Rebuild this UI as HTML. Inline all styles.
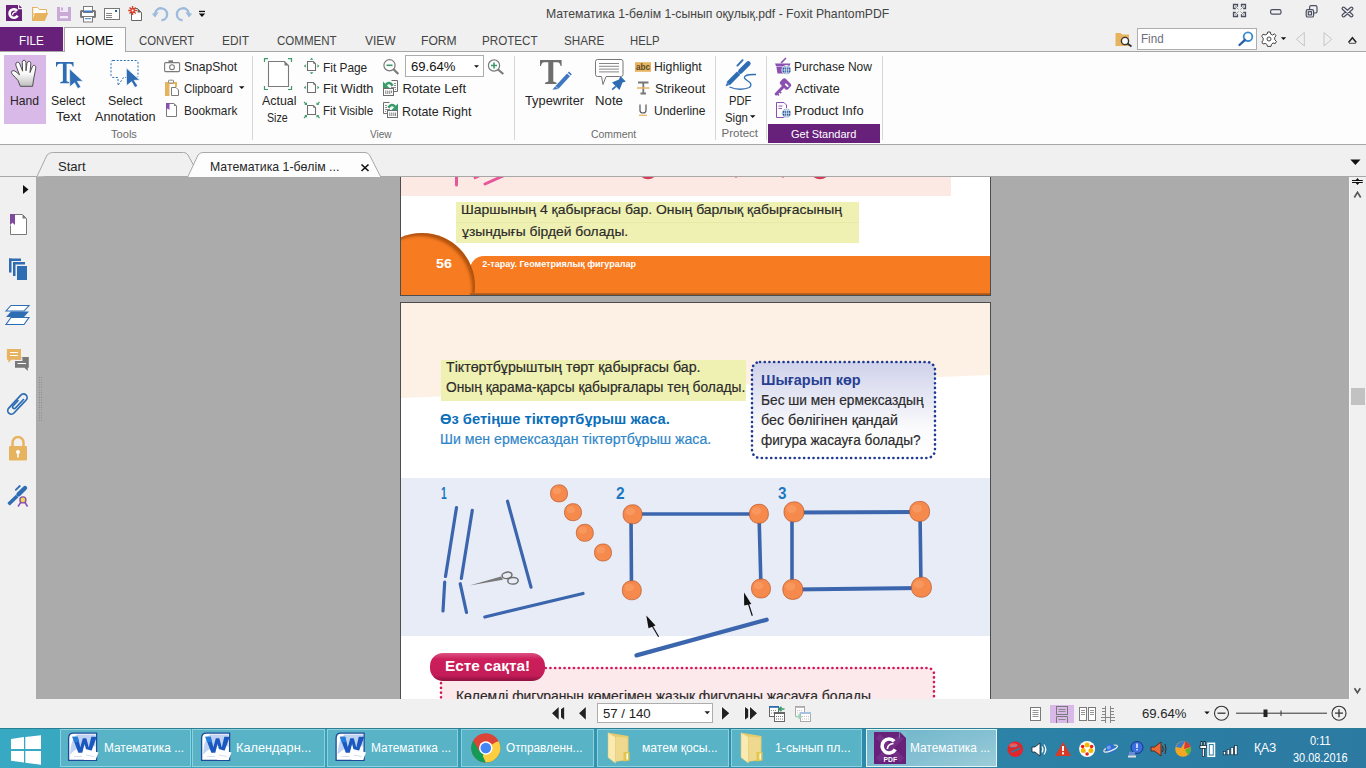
<!DOCTYPE html>
<html><head><meta charset="utf-8"><style>
*{margin:0;padding:0;box-sizing:border-box}
html,body{width:1366px;height:768px;overflow:hidden;background:#f0f0f0;font-family:"Liberation Sans",sans-serif;font-size:12px;color:#333}
.a{position:absolute}
.t{position:absolute;white-space:nowrap;line-height:1;transform-origin:0 0}
svg{position:absolute;overflow:visible}
</style></head><body>

<svg style="left:0;top:0" width="220" height="27">
 <path d="M6 5H18V9.2H22V21H6Z" fill="#68217a"/>
 <path d="M19.2 5V7.9H22Z" fill="#68217a"/>
 <path d="M17.2 10.8A4.3 4.3 0 1 0 17.6 15.6" stroke="#fff" stroke-width="2.6" fill="none"/>
 <path d="M12.3 15.2Q13 11.5 16.5 11.8" stroke="#fff" stroke-width="1.3" fill="none"/>
 <path d="M32.5 7.5H37.5L39.5 9.5H46.5V14H32.5Z" fill="#fff" stroke="#e8b35f" stroke-width="1"/>
 <path d="M32 21L35.3 13H48.2L44.8 21Z" fill="#e8b35f"/>
 <rect x="32" y="7" width="1.2" height="14" fill="#e8b35f"/>
 <rect x="57" y="7" width="14" height="14" fill="#c9aad6"/>
 <rect x="60" y="7" width="8" height="5" fill="#f1ecf4"/>
 <rect x="61" y="7.5" width="2" height="3" fill="#c9aad6"/>
 <rect x="60" y="16" width="8" height="2.3" fill="#f1ecf4"/>
 <rect x="81" y="11" width="14" height="6" rx="0.5" fill="#fff" stroke="#7a7a7a" stroke-width="2"/>
 <rect x="83.5" y="6.5" width="9" height="6" fill="#fff" stroke="#7a7a7a"/>
 <rect x="84" y="10.5" width="8" height="1.8" fill="#3f7bc0"/>
 <rect x="83.5" y="16.5" width="9" height="5.5" fill="#fff" stroke="#7a7a7a"/>
 <rect x="85" y="18.2" width="6" height="1" fill="#3f7bc0"/>
 <rect x="104.5" y="8.5" width="15" height="11" fill="#fff" stroke="#777"/>
 <path d="M106 13.5H112M106 15.5H112M106 17.5H112" stroke="#777" stroke-width="0.9"/>
 <rect x="115" y="10" width="2" height="2" fill="#1f5fb0"/>
 <path d="M131.5 8.5H137.5L141.5 12.5V20.5H131.5Z" fill="#fff" stroke="#666"/>
 <path d="M137.5 8.5V12.5H141.5Z" fill="#666"/>
 <path d="M128.2 10.5H137M132.6 6V15M129.5 7.4L135.7 13.6M135.7 7.4L129.5 13.6" stroke="#d9412b" stroke-width="1.4"/>
 <circle cx="132.6" cy="10.5" r="1" fill="#fff"/>
 <path d="M155.2 13.2A6 6 0 1 1 161.5 20.3" stroke="#9dbcdc" stroke-width="2.4" fill="none"/>
 <path d="M151.8 13.8L158.8 12L155 17.5Z" fill="#9dbcdc"/>
 <path d="M188.8 13.2A6 6 0 1 0 182.5 20.3" stroke="#9dbcdc" stroke-width="2.4" fill="none"/>
 <path d="M192.2 13.8L185.2 12L189 17.5Z" fill="#9dbcdc"/>
 <rect x="199" y="10.8" width="6" height="1.3" fill="#111"/>
 <path d="M198.8 13.4H205.2L202 17Z" fill="#111"/>
</svg>
<svg style="left:1220px;top:0" width="146" height="27">
 <g fill="none" stroke="#4b4e5f" stroke-width="1.2">
  <path d="M17.5 6.8V4.5H13.5V8.5H15.8M21.5 6.8V4.5H25.5V8.5H23.2M17.5 14.2V16.5H13.5V12.5H15.8M21.5 14.2V16.5H25.5V12.5H23.2" stroke-width="1.3"/>
  <path d="M18.3 9.3L15.5 6.5M20.7 9.3L23.5 6.5M18.3 11.7L15.5 14.5M20.7 11.7L23.5 14.5" stroke-width="1" stroke-dasharray="1 0.6"/>
  <rect x="50.6" y="9.6" width="10.4" height="4.6" rx="1.6"/>
  <rect x="89.6" y="5.6" width="7.4" height="7.4" rx="1.6"/>
  <rect x="86.2" y="9.6" width="7.4" height="7.4" rx="1.6" fill="#f0f0f0"/>
  <rect x="88.3" y="11.7" width="3.2" height="3.2"/>
 </g>
 <path d="M123.5 8.5L131.5 15.5M131.5 8.5L123.5 15.5" stroke="#4b4e5f" stroke-width="4" stroke-linecap="round"/>
 <path d="M123.5 8.5L131.5 15.5M131.5 8.5L123.5 15.5" stroke="#f0f0f0" stroke-width="1.6" stroke-linecap="round"/>
</svg>

<div class="a" style="left:0;top:27px;width:63px;height:24px;background:#68217a"></div>
<div class="a" style="left:0;top:51px;width:1366px;height:1px;background:#a6a6a6"></div>
<div class="a" style="left:64px;top:27px;width:62px;height:25px;background:#fdfdfd;border:1px solid #a6a6a6;border-bottom:none"></div>
<div class="a" style="left:0;top:52px;width:1366px;height:92px;background:#fdfdfd"></div>
<div class="a" style="left:65px;top:51px;width:60px;height:1px;background:#fdfdfd"></div>
<div class="a" style="left:0;top:144px;width:1366px;height:1px;background:#a6a6a6"></div>

<div class="a" style="left:4px;top:55px;width:42px;height:69px;background:#d8b9e7"></div>
<div class="a" style="left:252px;top:56px;width:1px;height:84px;background:#d6d6d6"></div>
<div class="a" style="left:514px;top:56px;width:1px;height:84px;background:#d6d6d6"></div>
<div class="a" style="left:715px;top:56px;width:1px;height:84px;background:#d6d6d6"></div>
<div class="a" style="left:766px;top:56px;width:1px;height:84px;background:#d6d6d6"></div>
<div class="a" style="left:882px;top:56px;width:1px;height:84px;background:#d6d6d6"></div>
<div class="a" style="left:768px;top:124px;width:112px;height:19px;background:#68217a"></div>
<div class="a" style="left:405px;top:55px;width:79px;height:22px;background:#fff;border:1px solid #adadad"></div>
<svg style="left:0;top:0" width="1366" height="145">
 <defs><linearGradient id="hg" x1="0" y1="0" x2="0" y2="1"><stop offset="0" stop-color="#fff"/><stop offset="0.5" stop-color="#fafafa"/><stop offset="1" stop-color="#bdbdbd"/></linearGradient></defs>
 <path d="M20.3 86.3L18 80.5Q15 77 12.3 74.3Q10.5 72 12.2 70.8Q13.8 70 16 71.8L19.5 74.8L15.8 65.2Q15.3 62.5 17.3 62.2Q19 62 19.8 64L22.6 71.2L22.3 62.4Q22.4 60.2 24.1 60.2Q25.8 60.3 25.9 62.4L26 70.8L27 63.2Q27.5 61.2 29.3 61.4Q31 61.7 30.8 63.8L30 72.5L32.3 66.8Q33 65 34.6 65.4Q36.2 66 35.8 67.8L33.5 80L32.6 86.3Z" fill="url(#hg)" stroke="#4a4a4a" stroke-width="0.95" stroke-linejoin="round"/>
 <path d="M56 62H73.5V66.8H72.8Q72.2 63.8 70 63.8H66.6V81.3L69.3 82.2V83.2H60.2V82.2L62.9 81.3V63.8H59.5Q57.3 63.8 56.7 66.8H56Z" fill="#2e6db4"/>
 <path d="M69.5 68.8L83 81.3H77.2L80.9 87L77.8 88.6L74.6 82.8L69.8 86.8Z" fill="#2e6db4" stroke="#fdfdfd" stroke-width="0.6"/>
 <path d="M113 60.5H136Q138 60.5 138 62.5V75.5Q138 77.5 136 77.5H123.5L118 85.5V77.5H113Q111 77.5 111 75.5V62.5Q111 60.5 113 60.5Z" fill="none" stroke="#2e6db4" stroke-width="1" stroke-dasharray="2 1.6"/>
 <path d="M126.2 67.8L140 80.3H134.2L137.9 86L134.8 87.6L131.6 81.8L126.5 85.8Z" fill="#2e6db4" stroke="#fdfdfd" stroke-width="0.8"/>
 <rect x="164.6" y="62.6" width="15" height="9" rx="1" fill="none" stroke="#7a7a7a" stroke-width="1.1"/>
 <rect x="168.5" y="60.3" width="4.5" height="2.3" fill="#7a7a7a"/>
 <circle cx="172" cy="67.2" r="2.4" fill="none" stroke="#7a7a7a" stroke-width="1.1"/>
 <rect x="165" y="82" width="4.5" height="14" fill="#e8b35f"/>
 <rect x="165" y="82" width="12" height="2" fill="#e8b35f"/>
 <rect x="175" y="82" width="2" height="5" fill="#e8b35f"/>
 <rect x="168.5" y="80.2" width="5" height="2.8" rx="0.8" fill="#fff" stroke="#7a7a7a" stroke-width="0.9"/>
 <path d="M171.5 87.5H176L178.5 90V95.5H171.5Z" fill="#fff" stroke="#7a7a7a" stroke-width="1"/>
 <path d="M239 86.3H244.5L241.75 89.1Z" fill="#111"/>
 <path d="M166.5 103.5H174L176.5 106V116.5H166.5Z" fill="#fff" stroke="#7a7a7a" stroke-width="1"/>
 <path d="M174 103.5V106H176.5Z" fill="#7a7a7a"/>
 <path d="M166 103H169.5V110L167.75 108.5L166 110Z" fill="#8a4fb0"/>
 <!-- actual size -->
 <path d="M264.5 62V58.6H268M288 58.6H291.5V62M264.5 86V89.5H268M288 89.5H291.5V86" fill="none" stroke="#3a9a6a" stroke-width="1.2"/>
 <path d="M268.5 61.5H284.5L288.5 65.5V86.5H268.5Z" fill="#fff" stroke="#7a7a7a" stroke-width="1.1"/>
 <path d="M284.5 61.5V65.5H288.5Z" fill="#7a7a7a"/>
 <!-- fit page -->
 <path d="M307.5 61.5H313.3L315.5 63.7V70.5H307.5Z" fill="#fff" stroke="#6e6e6e" stroke-width="1.1"/>
 <path d="M313.3 61.5V63.7H315.5Z" fill="#6e6e6e"/>
 <path d="M309.8 59.8L311.6 57.8L313.4 59.8ZM309.8 72.3L311.6 74.3L313.4 72.3ZM305.8 64.2L303.8 66L305.8 67.8ZM317.4 64.2L319.4 66L317.4 67.8Z" fill="#3a9a6a"/>
 <path d="M307.5 82.5H313.3L315.5 84.7V92.5H307.5Z" fill="#fff" stroke="#6e6e6e" stroke-width="1.1"/>
 <path d="M313.3 82.5V84.7H315.5Z" fill="#6e6e6e"/>
 <path d="M305.8 85.7L303.8 87.5L305.8 89.3ZM317.4 85.7L319.4 87.5L317.4 89.3Z" fill="#3a9a6a"/>
 <path d="M307.5 105.5H313.3L315.5 107.7V114.5H307.5Z" fill="#fff" stroke="#6e6e6e" stroke-width="1.1"/>
 <path d="M313.3 105.5V107.7H315.5Z" fill="#6e6e6e"/>
 <path d="M304 102L306 104M319.5 102L317.5 104M304 118L306 116M319.5 118L317.5 116" stroke="#3a9a6a" stroke-width="1.1"/>
 <path d="M307 105H304.3L307 102.3ZM316.5 105H319.2L316.5 102.3ZM307 115H304.3L307 117.7ZM316.5 115H319.2L316.5 117.7Z" fill="#3a9a6a"/>
 <!-- zoom out / in -->
 <circle cx="389.5" cy="65.3" r="5.6" fill="none" stroke="#7a7a7a" stroke-width="1.2"/>
 <path d="M393.5 69.3L398.3 74" stroke="#7a7a7a" stroke-width="2.2"/>
 <path d="M386.5 65.3H392.5" stroke="#3a9a6a" stroke-width="1.6"/>
 <circle cx="494" cy="65.5" r="5.6" fill="none" stroke="#7a7a7a" stroke-width="1.2"/>
 <path d="M498 69.5L503.3 74" stroke="#7a7a7a" stroke-width="2.2"/>
 <path d="M491 65.5H497M494 62.5V68.5" stroke="#3a9a6a" stroke-width="1.6"/>
 <path d="M474 65.2H479L476.5 67.8Z" fill="#111"/>
 <!-- rotate -->
 <path d="M391.5 80.5H397.5V91.5H393.5" fill="none" stroke="#6e6e6e" stroke-width="1"/>
 <path d="M394 83.5H396M394 85.5H396M391 87.5H396M395 89.5H396" stroke="#6e6e6e" stroke-width="0.8"/>
 <rect x="383.5" y="88.5" width="10" height="7" fill="#fff" stroke="#6e6e6e" stroke-width="1"/>
 <path d="M385.8 90.5V94M387.8 90.5V94M389.8 90.5V94M391.6 90.5V93" stroke="#6e6e6e" stroke-width="0.9"/>
 <path d="M383 81.5V88H389.5Z" fill="#3a9a6a"/>
 <path d="M385.8 84.8Q389.5 80.8 392.6 85.8" stroke="#3a9a6a" stroke-width="2.6" fill="none"/>
 <path d="M389.5 102.5H383.5V113.5H387.5" fill="none" stroke="#6e6e6e" stroke-width="1"/>
 <path d="M385 105.5H387M385 107.5H387M385 109.5H390M385 111.5H386" stroke="#6e6e6e" stroke-width="0.8"/>
 <rect x="387.5" y="110.5" width="10" height="7" fill="#fff" stroke="#6e6e6e" stroke-width="1"/>
 <path d="M389.8 112.5V116M391.8 112.5V116M393.8 112.5V116M395.6 112.5V116" stroke="#6e6e6e" stroke-width="0.9"/>
 <path d="M398 103.5V110H391.5Z" fill="#3a9a6a"/>
 <path d="M395.2 106.8Q391.5 102.8 388.4 107.8" stroke="#3a9a6a" stroke-width="2.6" fill="none"/>
 <!-- typewriter -->
 <path d="M540 60H561.6V66H560.6Q560 62.2 557.5 62.2H553.3V81.5L556.5 82.7V84H545V82.7L548.3 81.5V62.2H544.1Q541.6 62.2 541 66H540Z" fill="#6e6e6e"/>
 <path d="M555.5 86L567 73.5L570 76.3L558.5 88.8Z" fill="#3f78c0"/>
 <path d="M567.8 72.7L569 71.5L571.8 74.2L570.7 75.4Z" fill="#3f78c0"/>
 <path d="M555.2 86.3L552.5 89.8L558.2 89Z" fill="#3f78c0"/>
 <!-- note -->
 <path d="M597.5 59.5H621Q623 59.5 623 61.5V74.5Q623 76.5 621 76.5H606L603 84.5L601.5 76.5H597.5Q595.5 76.5 595.5 74.5V61.5Q595.5 59.5 597.5 59.5Z" fill="#fff" stroke="#777" stroke-width="1"/>
 <path d="M599 63.5H619M599 66.3H619M599 69.1H619M599 71.9H619" stroke="#888" stroke-width="1"/>
 <path d="M620.3 76L625.8 81.4L622.5 82.5L619.5 89.9L612 82.4L619 79.5Z" fill="#2e6db4" stroke="#fdfdfd" stroke-width="0.8" paint-order="stroke"/>
 <path d="M615.8 86.3L612.2 89.7" stroke="#2e6db4" stroke-width="1.6"/>
 <!-- highlight/strike/underline -->
 <rect x="635" y="62.2" width="16" height="9.6" fill="#e8b35f"/>
 <text x="636" y="70.3" style="font-family:'Liberation Sans';font-weight:bold" font-size="9" fill="#5a4a30" textLength="14" lengthAdjust="spacingAndGlyphs">abc</text>
 <path d="M638 82.5H648.5M643.3 82.5V93.5M640.5 93.5H646" stroke="#777" stroke-width="1.8"/>
 <path d="M637 88H649.5" stroke="#e8b35f" stroke-width="1.5"/>
 <path d="M640 104.5V110.5Q640 113 643 113Q646 113 646 110.5V104.5" stroke="#555" stroke-width="1.2" fill="none"/>
 <path d="M639 115.3H647" stroke="#e8b35f" stroke-width="1.2"/>
 <!-- pdf sign -->
 <path d="M728.2 83.6L738.6 73.2" stroke="#2e6db4" stroke-width="4.6"/>
 <path d="M725.6 86.2L727 82.6L729.3 84.9Z" fill="#2e6db4"/>
 <path d="M740.3 71.5L748.3 63.5" stroke="#2e6db4" stroke-width="4.6" stroke-linecap="round"/>
 <path d="M737.4 65.6L742.6 60.2" stroke="#2e6db4" stroke-width="1.9" stroke-linecap="round"/>
 <path d="M729.5 87Q740 91.2 749.5 87.5Q753.2 84 747.5 80.7Q742.5 77.8 745.5 75.8Q748.5 74.3 756 74.5" stroke="#2e6db4" stroke-width="1.3" fill="none"/>
 <path d="M750 115.3H755.5L752.7 118Z" fill="#111"/>
 <!-- purchase/activate/product -->
 <path d="M775 63.5H790.5L789.5 66H776Z" fill="#8a4fb0"/>
 <path d="M776.3 66.5H787L786 73.5H777.5Z" fill="#8a4fb0"/>
 <path d="M781 63L786 58" stroke="#8a4fb0" stroke-width="1.6"/>
 <circle cx="786.5" cy="70" r="4.6" fill="#2d5fa0" stroke="#fdfdfd" stroke-width="0.8"/>
 <path d="M782 70H791M786.5 65.5V74.5M783.3 67H789.7M783.3 73H789.7" stroke="#fff" stroke-width="0.6" fill="none"/>
 <ellipse cx="786.5" cy="70" rx="2" ry="4.5" fill="none" stroke="#fff" stroke-width="0.6"/>
 <g transform="translate(785.5 84) rotate(45)"><rect x="-5.5" y="-3.8" width="11" height="7.6" rx="2" fill="#8a4fb0"/><rect x="-0.5" y="-1" width="4.5" height="2" rx="1" fill="#fdfdfd"/></g>
 <path d="M783 87L776.2 94" stroke="#8a4fb0" stroke-width="3" stroke-linecap="round"/>
 <path d="M777.3 93.8L779 95.5M779.5 91.5L781.2 93.2" stroke="#8a4fb0" stroke-width="1.6"/>
 <path d="M776.5 102.5H784L786.5 105V109M784.5 117.5H776.5V102.5" fill="none" stroke="#8a4fb0" stroke-width="1"/>
 <path d="M778.5 106H782.5M778.5 108.5H782" stroke="#8a4fb0" stroke-width="0.9"/>
 <circle cx="786.5" cy="113.3" r="4.6" fill="#2d5fa0" stroke="#fdfdfd" stroke-width="0.8"/>
 <path d="M782 113.3H791M786.5 108.8V117.8M783.3 110.5H789.7M783.3 116.2H789.7" stroke="#fff" stroke-width="0.6" fill="none"/>
 <ellipse cx="786.5" cy="113.3" rx="2" ry="4.5" fill="none" stroke="#fff" stroke-width="0.6"/>
</svg>

<div class="a" style="left:1137px;top:28px;width:120px;height:22px;background:#fff;border:1px solid #adadad"></div>
<svg style="left:0;top:0" width="1366" height="60">
 <path d="M1115.5 33H1120.5L1122 34.5H1129V46H1115.5Z" fill="#e8b35f"/>
 <circle cx="1125" cy="41" r="3.6" fill="#fff" stroke="#333" stroke-width="1.4"/>
 <path d="M1127.5 43.5L1131.5 46.5" stroke="#333" stroke-width="1.8"/>
 <circle cx="1248" cy="36.7" r="4.3" fill="none" stroke="#3a8ad0" stroke-width="1.8"/>
 <path d="M1245 39.8L1239.5 45" stroke="#2a5fa5" stroke-width="2.4" stroke-linecap="round"/>
 <g transform="translate(1269 39)"><path d="M-1.3 -7H1.3L1.8 -4.8L3.6 -3.9L5.5 -5.2L7 -3.3L5.6 -1.3L5.8 0.8L7.4 2.4L6.2 4.6L4 4L2.4 5.4L2 7.4H-1.5L-2.1 5.4L-3.8 4.4L-5.9 5L-7.2 3L-5.8 1.2L-5.9 -0.9L-7.3 -2.8L-6 -4.8L-3.8 -4.1L-1.9 -5Z" fill="#fff" stroke="#444" stroke-width="1"/><circle r="2" fill="none" stroke="#444" stroke-width="1"/></g>
 <path d="M1280.8 37.2H1286.2L1283.5 40Z" fill="#111"/>
 <path d="M1304.3 32.5L1296.5 39.2L1304.3 46Z" fill="none" stroke="#c6c6c6" stroke-width="1"/>
 <path d="M1324 32.5L1331.8 39.2L1324 46Z" fill="none" stroke="#c6c6c6" stroke-width="1"/>
 <path d="M1348.5 42.5L1352.4 37.7L1356.3 42.5" fill="none" stroke="#222" stroke-width="1.5"/>
 <path d="M1349 43.3H1355.8" stroke="#222" stroke-width="0.8"/>
</svg>

<div class="a" style="left:0;top:176px;width:1366px;height:1px;background:#a8a8a8"></div>
<svg style="left:0;top:145px" width="400" height="32">
<path d="M37 31.5L47 10Q49.5 7.5 52.5 7.5H183.5Q186.5 7.5 188 10L195 23" fill="#f0f0f0" stroke="#a8a8a8" stroke-width="1"/>
<path d="M188 31.5L198 10Q200 7.5 203 7.5H365Q368 7.5 369.5 10L380.5 31.5Z" fill="#fdfdfd" stroke="#a8a8a8" stroke-width="1"/>
<path d="M188.5 31.5H380" stroke="#fdfdfd" stroke-width="1.2"/>
<path d="M361.5 164.5L368.5 171M368.5 164.5L361.5 171" transform="translate(0 -145)" stroke="#111" stroke-width="1.6"/>
</svg>
<svg style="left:1345px;top:155px" width="20" height="15"><path d="M5.3 4.5H15.5L10.4 10Z" fill="#111"/></svg>

<svg style="left:0;top:177px" width="36" height="521">
 <path d="M23 8L28.5 12.5L23 17Z" fill="#111"/>
 <path d="M10.5 37.5H22.5L26.5 41.5V57.5H10.5Z" fill="#fff" stroke="#7a7a7a" stroke-width="1"/>
 <path d="M22.5 37.5V41.5H26.5Z" fill="#7a7a7a"/>
 <path d="M10 37H15V48.2L12.5 46L10 48.2Z" fill="#7d4a9e"/><path d="M10 48.5L12.5 46.3L15 48.5" fill="none" stroke="#fff" stroke-width="0.8"/>
 <rect x="9" y="81.5" width="2.5" height="14" fill="#2e6db4"/><rect x="9" y="81.5" width="12" height="2.5" fill="#2e6db4"/>
 <rect x="13" y="85" width="2.5" height="14" fill="#2e6db4"/><rect x="13" y="85" width="12" height="2.5" fill="#2e6db4"/>
 <rect x="17" y="89" width="10" height="14" fill="#2e6db4"/>
 <path d="M11 128.5H29L24 134H6Z" fill="#fff" stroke="#2e6db4" stroke-width="1.1"/>
 <path d="M11 134.5H29L24 140H6Z" fill="#2e6db4"/>
 <path d="M11 140.5H29L24 147.5H6Z" fill="#fff" stroke="#2e6db4" stroke-width="1.1"/>
 <path d="M15 180H28.8V190.8H27.8L27.8 194L24.5 190.8H15Z" fill="#787878"/>
 <path d="M17.5 186.5H26" stroke="#fff" stroke-width="1.1"/>
 <path d="M6.9 171.9H21V182.8H11.5L8.3 185.8V182.8H6.9Z" fill="#e8b35f" stroke="#f0f0f0" stroke-width="0.9" paint-order="stroke"/>
 <path d="M10 175.5H18M10 178.5H18" stroke="#fff" stroke-width="1.1"/>
 <path d="M21.8 180.5V183.5H15" fill="none" stroke="#f0f0f0" stroke-width="1.2"/>
 <g transform="translate(17.5 227) rotate(-47)" fill="none" stroke="#2e6db4" stroke-width="1.7"><path d="M6.5 3.6H-9A3.6 3.6 0 0 1 -9 -3.6H8.8A3.6 3.6 0 0 1 8.8 3.6H6"/><path d="M8 1.3H-4.8A1.7 1.7 0 0 1 -4.8 -2H3.5"/></g>
 <path d="M12.5 270V265.5A5.5 5.5 0 0 1 23.5 265.5V270" fill="none" stroke="#e8b35f" stroke-width="2.5"/>
 <rect x="9" y="269" width="18" height="14.5" rx="1" fill="#e8b35f"/>
 <circle cx="18" cy="275" r="2" fill="#fff"/><rect x="17.2" y="275.5" width="1.6" height="5" fill="#fff"/>
 <path d="M8.6 327.3L17.2 319" stroke="#2e6db4" stroke-width="3.6" stroke-linecap="butt"/>
 <path d="M8.3 328L9.8 325.8L10.8 327Z" fill="#2e6db4"/>
 <path d="M18.5 317.3L25 311" stroke="#2e6db4" stroke-width="4.4" stroke-linecap="round"/>
 <path d="M15.8 312.8L19.8 309" stroke="#2e6db4" stroke-width="1.8" stroke-linecap="round"/>
 <path d="M21 325L18 329.5M24.8 325L27.5 329.5" stroke="#8a4fb0" stroke-width="1.5"/>
 <circle cx="22.9" cy="322.9" r="3" fill="#f5d94a" stroke="#8a4fb0" stroke-width="1.4"/>
</svg>

<div class="a" style="left:36px;top:177px;width:1313px;height:522px;background:#ababab;overflow:hidden">
<div class="a" style="left:-36px;top:-177px;width:1366px;height:768px">

<div class="a" style="left:400px;top:100px;width:591px;height:196px;background:#fff;border:1px solid #4d4d4d;border-top:none;overflow:hidden">
 <div class="a" style="left:0;top:0;width:550px;height:96px;background:#fde9e3"></div>
 <svg style="left:-401px;top:-100px" width="1366" height="400">
  <line x1="456.5" y1="175" x2="456.5" y2="185" stroke="#e8559a" stroke-width="3" stroke-linecap="round"/>
  <line x1="485" y1="184" x2="504" y2="175.5" stroke="#e8559a" stroke-width="3" stroke-linecap="round"/>
  <line x1="474" y1="178.3" x2="479" y2="176" stroke="#e8559a" stroke-width="2.5"/>
  <path d="M641 175 Q648 181 655 175" stroke="#d83a5a" stroke-width="2.5" fill="none"/>
  <path d="M813 175 Q820 181 827 175" stroke="#d83a5a" stroke-width="2.5" fill="none"/>
  <circle cx="736" cy="176" r="1.5" fill="#d83a5a"/>
  <circle cx="783" cy="176" r="1.5" fill="#d83a5a"/>
 </svg>
 <div class="a" style="left:55px;top:102px;width:403px;height:41px;background:#eff1b3"></div>
 <div class="a" style="left:55px;top:122px;width:403px;height:1px;background:#e7e9ab"></div>
 <div class="a" style="left:69px;top:156px;width:521px;height:40px;background:#f77b20;border-radius:14px 0 0 0"></div>
 <div class="a" style="left:-32px;top:133px;width:106px;height:106px;border-radius:50%;background:#f77b20;box-shadow:inset -3px 3px 3px rgba(120,50,0,.55)"></div>
 <div class="a" style="left:69px;top:193px;width:521px;height:3px;background:linear-gradient(#c8661c,#8b4a1a)"></div>
</div>
<div class="a" style="left:400px;top:302px;width:591px;height:500px;background:#fff;border:1px solid #4d4d4d;overflow:hidden">
 <svg style="left:-401px;top:-303px" width="1366" height="800">
  <path d="M401 303 L990 303 L990 375 L401 398 Z" fill="#fdf0e5"/>
  <defs><linearGradient id="g1" x1="0" y1="0" x2="0" y2="1"><stop offset="0" stop-color="#cfd2ea"/><stop offset="0.7" stop-color="#fbfbfd"/><stop offset="1" stop-color="#fff"/></linearGradient></defs>
  <rect x="752" y="362" width="183" height="96" rx="8" fill="url(#g1)" stroke="#1f3a93" stroke-width="2.6" stroke-dasharray="0.1 4.6" stroke-linecap="round"/>
  <rect x="401" y="478" width="589" height="158" fill="#e8ecf7"/>
 </svg>
 <div class="a" style="left:40px;top:57px;width:305px;height:41px;background:#eff1b3"></div>
</div>
<svg style="left:0;top:0" width="1366" height="768"><line x1="456.5" y1="507.5" x2="445.5" y2="576.5" stroke="#3b66ad" stroke-width="3.2" stroke-linecap="round"/><line x1="444.7" y1="582" x2="443" y2="611" stroke="#3b66ad" stroke-width="3.2" stroke-linecap="round"/><line x1="472.3" y1="510.3" x2="461.3" y2="578.5" stroke="#3b66ad" stroke-width="3.2" stroke-linecap="round"/><line x1="460.2" y1="583.7" x2="466.5" y2="612.5" stroke="#3b66ad" stroke-width="3.2" stroke-linecap="round"/><line x1="507.5" y1="501.2" x2="531" y2="587.2" stroke="#3b66ad" stroke-width="3.2" stroke-linecap="round"/><line x1="484.8" y1="617" x2="583" y2="593.5" stroke="#3b66ad" stroke-width="3.2" stroke-linecap="round"/><g fill="none" stroke="#6e6e6e" stroke-width="1.5"><ellipse cx="507" cy="575.3" rx="5" ry="3.2" transform="rotate(-10 507 575.3)"/><ellipse cx="513" cy="580.8" rx="5.2" ry="3.3" transform="rotate(-5 513 580.8)"/></g><path d="M469.5 585.5L501 576.5L503 579.8Z" fill="#7a7a7a"/><g transform="translate(559 493.4)"><path d="M-8.5 0 C-8.5 -5.10 -5.10 -8.5 0 -8.5 C5.10 -8.93 8.5 -4.68 8.5 0 C8.67 5.10 5.10 8.5 0 8.5 C-5.10 8.5 -8.5 5.10 -8.5 0Z" fill="#f58a4c" stroke="#b9552a" stroke-width="0.7"/><ellipse cx="-2.12" cy="-2.55" rx="4.25" ry="3.40" fill="#f9a36e" opacity="0.55"/></g><g transform="translate(573 512.2)"><path d="M-8.5 0 C-8.5 -5.10 -5.10 -8.5 0 -8.5 C5.10 -8.93 8.5 -4.68 8.5 0 C8.67 5.10 5.10 8.5 0 8.5 C-5.10 8.5 -8.5 5.10 -8.5 0Z" fill="#f58a4c" stroke="#b9552a" stroke-width="0.7"/><ellipse cx="-2.12" cy="-2.55" rx="4.25" ry="3.40" fill="#f9a36e" opacity="0.55"/></g><g transform="translate(584.8 532.8)"><path d="M-8.5 0 C-8.5 -5.10 -5.10 -8.5 0 -8.5 C5.10 -8.93 8.5 -4.68 8.5 0 C8.67 5.10 5.10 8.5 0 8.5 C-5.10 8.5 -8.5 5.10 -8.5 0Z" fill="#f58a4c" stroke="#b9552a" stroke-width="0.7"/><ellipse cx="-2.12" cy="-2.55" rx="4.25" ry="3.40" fill="#f9a36e" opacity="0.55"/></g><g transform="translate(603 552.5)"><path d="M-8.5 0 C-8.5 -5.10 -5.10 -8.5 0 -8.5 C5.10 -8.93 8.5 -4.68 8.5 0 C8.67 5.10 5.10 8.5 0 8.5 C-5.10 8.5 -8.5 5.10 -8.5 0Z" fill="#f58a4c" stroke="#b9552a" stroke-width="0.7"/><ellipse cx="-2.12" cy="-2.55" rx="4.25" ry="3.40" fill="#f9a36e" opacity="0.55"/></g><line x1="632" y1="514" x2="759" y2="514" stroke="#3b66ad" stroke-width="3.6" stroke-linecap="round"/><line x1="631" y1="514" x2="631.5" y2="590" stroke="#3b66ad" stroke-width="3.6" stroke-linecap="round"/><line x1="759" y1="514" x2="761" y2="588" stroke="#3b66ad" stroke-width="3.6" stroke-linecap="round"/><g transform="translate(632.6 514.3)"><path d="M-9.5 0 C-9.5 -5.70 -5.70 -9.5 0 -9.5 C5.70 -9.97 9.5 -5.23 9.5 0 C9.69 5.70 5.70 9.5 0 9.5 C-5.70 9.5 -9.5 5.70 -9.5 0Z" fill="#f58a4c" stroke="#b9552a" stroke-width="0.7"/><ellipse cx="-2.38" cy="-2.85" rx="4.75" ry="3.80" fill="#f9a36e" opacity="0.55"/></g><g transform="translate(758.9 513.8)"><path d="M-9.5 0 C-9.5 -5.70 -5.70 -9.5 0 -9.5 C5.70 -9.97 9.5 -5.23 9.5 0 C9.69 5.70 5.70 9.5 0 9.5 C-5.70 9.5 -9.5 5.70 -9.5 0Z" fill="#f58a4c" stroke="#b9552a" stroke-width="0.7"/><ellipse cx="-2.38" cy="-2.85" rx="4.75" ry="3.80" fill="#f9a36e" opacity="0.55"/></g><g transform="translate(631.8 590.3)"><path d="M-9.5 0 C-9.5 -5.70 -5.70 -9.5 0 -9.5 C5.70 -9.97 9.5 -5.23 9.5 0 C9.69 5.70 5.70 9.5 0 9.5 C-5.70 9.5 -9.5 5.70 -9.5 0Z" fill="#f58a4c" stroke="#b9552a" stroke-width="0.7"/><ellipse cx="-2.38" cy="-2.85" rx="4.75" ry="3.80" fill="#f9a36e" opacity="0.55"/></g><g transform="translate(761 588.5)"><path d="M-9.5 0 C-9.5 -5.70 -5.70 -9.5 0 -9.5 C5.70 -9.97 9.5 -5.23 9.5 0 C9.69 5.70 5.70 9.5 0 9.5 C-5.70 9.5 -9.5 5.70 -9.5 0Z" fill="#f58a4c" stroke="#b9552a" stroke-width="0.7"/><ellipse cx="-2.38" cy="-2.85" rx="4.75" ry="3.80" fill="#f9a36e" opacity="0.55"/></g><line x1="794" y1="512.5" x2="920" y2="512" stroke="#3b66ad" stroke-width="4" stroke-linecap="round"/><line x1="793" y1="589.5" x2="921" y2="588" stroke="#3b66ad" stroke-width="4" stroke-linecap="round"/><line x1="792" y1="512" x2="792" y2="589" stroke="#3b66ad" stroke-width="3.6" stroke-linecap="round"/><line x1="920" y1="512" x2="921" y2="587" stroke="#3b66ad" stroke-width="3.6" stroke-linecap="round"/><g transform="translate(794 511.9)"><path d="M-10 0 C-10 -6.00 -6.00 -10 0 -10 C6.00 -10.50 10 -5.50 10 0 C10.20 6.00 6.00 10 0 10 C-6.00 10 -10 6.00 -10 0Z" fill="#f58a4c" stroke="#b9552a" stroke-width="0.7"/><ellipse cx="-2.50" cy="-3.00" rx="5.00" ry="4.00" fill="#f9a36e" opacity="0.55"/></g><g transform="translate(919.6 511.4)"><path d="M-10 0 C-10 -6.00 -6.00 -10 0 -10 C6.00 -10.50 10 -5.50 10 0 C10.20 6.00 6.00 10 0 10 C-6.00 10 -10 6.00 -10 0Z" fill="#f58a4c" stroke="#b9552a" stroke-width="0.7"/><ellipse cx="-2.50" cy="-3.00" rx="5.00" ry="4.00" fill="#f9a36e" opacity="0.55"/></g><g transform="translate(792.8 589.4)"><path d="M-10 0 C-10 -6.00 -6.00 -10 0 -10 C6.00 -10.50 10 -5.50 10 0 C10.20 6.00 6.00 10 0 10 C-6.00 10 -10 6.00 -10 0Z" fill="#f58a4c" stroke="#b9552a" stroke-width="0.7"/><ellipse cx="-2.50" cy="-3.00" rx="5.00" ry="4.00" fill="#f9a36e" opacity="0.55"/></g><g transform="translate(921.4 587.2)"><path d="M-10 0 C-10 -6.00 -6.00 -10 0 -10 C6.00 -10.50 10 -5.50 10 0 C10.20 6.00 6.00 10 0 10 C-6.00 10 -10 6.00 -10 0Z" fill="#f58a4c" stroke="#b9552a" stroke-width="0.7"/><ellipse cx="-2.50" cy="-3.00" rx="5.00" ry="4.00" fill="#f9a36e" opacity="0.55"/></g><line x1="636.5" y1="655.4" x2="766.7" y2="619.7" stroke="#3b66ad" stroke-width="4.2" stroke-linecap="round"/><line x1="658.6" y1="636.7" x2="650.5" y2="623" stroke="#111" stroke-width="1.2"/><path d="M646.3 615.5L655.5 625.5L648.5 628.3Z" fill="#111"/><line x1="752.3" y1="615.8" x2="747.5" y2="601" stroke="#111" stroke-width="1.2"/><path d="M744 592.5L751.3 604L744.2 605.5Z" fill="#111"/><rect x="441" y="668" width="493" height="60" rx="6" fill="#fbe9eb" stroke="#d4185c" stroke-width="2.6" stroke-dasharray="0.1 4.6" stroke-linecap="round"/><defs><linearGradient id="g2" x1="0" y1="0" x2="0" y2="1"><stop offset="0" stop-color="#dc5283"/><stop offset="0.22" stop-color="#cc1f5c"/><stop offset="0.8" stop-color="#c41c57"/><stop offset="1" stop-color="#8e1240"/></linearGradient></defs><rect x="430" y="653" width="115" height="28" rx="13" fill="url(#g2)"/></svg>
<div class="t" style="left:460.84px;top:203.34px;font-size:13.5px;color:#2b2b2b;transform:scaleX(1.0343);-webkit-text-stroke:0.18px #2b2b2b;">Шаршының 4 қабырғасы бар. Оның барлық қабырғасының</div>
<div class="t" style="left:461.87px;top:224.97px;font-size:13.5px;color:#2b2b2b;transform:scaleX(1.0236);-webkit-text-stroke:0.18px #2b2b2b;">ұзындығы бірдей болады.</div>
<div class="t" style="left:436.35px;top:257.53px;font-size:12px;color:#fff;font-weight:bold;transform:scaleX(1.1920);-webkit-text-stroke:0px #fff;">56</div>
<div class="t" style="left:482.35px;top:260.43px;font-size:9px;color:#fff;font-weight:bold;-webkit-text-stroke:0px #fff;">2-тарау. Геометриялық фигуралар</div>
<div class="t" style="left:446.35px;top:359.77px;font-size:14px;color:#2b2b2b;transform:scaleX(1.0140);-webkit-text-stroke:0.18px #2b2b2b;">Тіктөртбұрыштың төрт қабырғасы бар.</div>
<div class="t" style="left:445.58px;top:380.17px;font-size:14px;color:#2b2b2b;transform:scaleX(0.9843);-webkit-text-stroke:0.18px #2b2b2b;">Оның қарама-қарсы қабырғалары тең болады.</div>
<div class="t" style="left:440.04px;top:412.07px;font-size:14px;color:#0c6fba;font-weight:bold;transform:scaleX(1.0498);-webkit-text-stroke:0px #0c6fba;">Өз бетіңше тіктөртбұрыш жаса.</div>
<div class="t" style="left:439.87px;top:432.17px;font-size:14px;color:#2f86c8;transform:scaleX(1.0086);-webkit-text-stroke:0.18px #2f86c8;">Ши мен ермексаздан тіктөртбұрыш жаса.</div>
<div class="t" style="left:761.00px;top:372.87px;font-size:14px;color:#283f93;font-weight:bold;transform:scaleX(1.0302);-webkit-text-stroke:0px #283f93;">Шығарып көр</div>
<div class="t" style="left:760.80px;top:392.97px;font-size:14px;color:#2b2b2b;transform:scaleX(0.9799);-webkit-text-stroke:0.18px #2b2b2b;">Бес ши мен ермексаздың</div>
<div class="t" style="left:761.14px;top:412.55px;font-size:14px;color:#2b2b2b;transform:scaleX(1.0187);-webkit-text-stroke:0.18px #2b2b2b;">бес бөлігінен қандай</div>
<div class="t" style="left:761.29px;top:433.15px;font-size:14px;color:#2b2b2b;transform:scaleX(0.9746);-webkit-text-stroke:0.18px #2b2b2b;">фигура жасауға болады?</div>
<div class="t" style="left:441.16px;top:485.61px;font-size:16px;color:#1a78c2;font-weight:bold;transform:scaleX(0.6400);-webkit-text-stroke:0px #1a78c2;">1</div>
<div class="t" style="left:616.32px;top:485.61px;font-size:16px;color:#1a78c2;font-weight:bold;transform:scaleX(0.9677);-webkit-text-stroke:0px #1a78c2;">2</div>
<div class="t" style="left:778.24px;top:485.61px;font-size:16px;color:#1a78c2;font-weight:bold;transform:scaleX(0.9500);-webkit-text-stroke:0px #1a78c2;">3</div>
<div class="t" style="left:444.94px;top:659.31px;font-size:14.5px;color:#fff;font-weight:bold;transform:scaleX(1.0573);-webkit-text-stroke:0px #fff;">Есте сақта!</div>
<div class="t" style="left:455.89px;top:689.07px;font-size:14px;color:#2b2b2b;transform:scaleX(0.9911);-webkit-text-stroke:0.18px #2b2b2b;">Көлемді фигураның көмегімен жазық фигураны жасауға болады.</div>
</div></div>

<svg style="left:38px;top:376px" width="6" height="48"><path d="M1.5 1V46M3.5 1V46" stroke="#8c8c8c" stroke-width="1" stroke-dasharray="1 1.5"/></svg>
<div class="a" style="left:1349px;top:177px;width:17px;height:522px;background:#f0f0f0;border-left:1px solid #f8f8f8"></div>
<svg style="left:1349px;top:177px" width="17" height="522">
 <path d="M3 3.5H13.8M3 5.5H13.8" stroke="#111" stroke-width="1.1"/>
 <path d="M6.6 3.2L8.5 1L10.4 3.2ZM6.6 5.8L8.5 8L10.4 5.8Z" fill="#111"/>
 <path d="M5.3 20.5L8.5 15.3L11.7 20.5" fill="none" stroke="#555" stroke-width="1.6"/>
 <rect x="2" y="211" width="14" height="17" fill="#c2c2c2"/>
 <path d="M5.5 511.3L8.4 515.8L11.3 511.3" fill="none" stroke="#555" stroke-width="1.7"/>
</svg>

<div class="a" style="left:597px;top:703px;width:116px;height:20px;background:#fff;border:1px solid #adadad"></div>
<div class="a" style="left:1050px;top:705px;width:24px;height:18px;background:#d8b9e7"></div>
<svg style="left:0;top:698px" width="1366" height="30">
 <g fill="#222" stroke="#fff" stroke-width="1.1" paint-order="stroke" stroke-linejoin="round">
 <path d="M552 15.3L558.7 9V21.7Z"/><path d="M561 11.3L564.2 9V21.7L561 19.3Z"/>
 <path d="M579 15.3L585.8 9V21.7Z"/>
 <path d="M704.5 13.3H710L707.3 16.2Z" stroke="none"/>
 <path d="M722 9V21.7L729.3 15.3Z"/>
 <path d="M745 9L748.2 11.3V19.3L745 21.7Z"/><path d="M750 9V21.7L757 15.3Z"/>
 </g>
 <rect x="769.5" y="8.5" width="9" height="10" fill="#fff" stroke="#666"/>
 <rect x="769" y="8" width="10" height="1.8" fill="#2e6db4"/>
 <path d="M771 12.5H777M771 15H777" stroke="#888" stroke-width="0.9" stroke-dasharray="1 1"/>
 <rect x="774.5" y="14.5" width="10" height="9" fill="#fff" stroke="#666"/>
 <rect x="774" y="14" width="11" height="2" fill="#666"/>
 <path d="M776 18.5H783M776 21H783" stroke="#666" stroke-width="0.9" stroke-dasharray="1 1"/>
 <path d="M784.5 11H779.5M781.5 8.8L779 11L781.5 13.2" stroke="#3a9a6a" stroke-width="1.7" fill="none"/>
 <rect x="795.5" y="8.5" width="9" height="10" fill="#fff" stroke="#aaa"/>
 <rect x="795" y="8" width="10" height="1.8" fill="#aaa"/>
 <path d="M797 12.5H803M797 15H803" stroke="#bbb" stroke-width="0.9" stroke-dasharray="1 1"/>
 <rect x="800.5" y="14.5" width="10" height="9" fill="#fff" stroke="#aaa"/>
 <rect x="800" y="14" width="11" height="2" fill="#a9c2e2"/>
 <path d="M802 18.5H809M802 21H809" stroke="#bbb" stroke-width="0.9" stroke-dasharray="1 1"/>
 <path d="M795 18.5H800.5M798.5 16.3L801 18.5L798.5 20.7" stroke="#9fd3b8" stroke-width="1.7" fill="none"/>
 <rect x="1030.5" y="9.5" width="10" height="13" fill="#fff" stroke="#7a7a7a"/>
 <path d="M1032.5 12.5H1038.5M1032.5 14.5H1038.5M1032.5 16.5H1038.5M1032.5 18.5H1038.5" stroke="#7a7a7a" stroke-width="0.8"/>
 <rect x="1056.5" y="8.5" width="11" height="8" fill="none" stroke="#7a7a7a"/>
 <path d="M1058.5 11.5H1065.5M1058.5 13.5H1065.5" stroke="#7a7a7a" stroke-width="0.8"/>
 <path d="M1056.5 25V18.5H1067.5V25" fill="none" stroke="#7a7a7a"/>
 <path d="M1058.5 21.5H1065.5" stroke="#7a7a7a" stroke-width="0.8"/>
 <rect x="1079.5" y="9.5" width="7" height="13" fill="#fff" stroke="#7a7a7a"/>
 <rect x="1088.5" y="9.5" width="7" height="13" fill="#fff" stroke="#7a7a7a"/>
 <path d="M1081 12.5H1085M1081 14.5H1085M1081 16.5H1085M1090 12.5H1094M1090 14.5H1094M1090 16.5H1094" stroke="#7a7a7a" stroke-width="0.8"/>
 <path d="M1105.5 8V25M1110.5 8V25M1105.5 10.5H1102M1105.5 13.5H1102M1105.5 16.5H1102M1110.5 10.5H1114M1110.5 13.5H1114M1110.5 16.5H1114M1101 19.5H1115M1101 22.5H1105.5M1110.5 22.5H1115" stroke="#7a7a7a" stroke-width="0.9"/>
 <path d="M1204.3 13.4H1209.7L1207 16.2Z" fill="#111"/>
 <circle cx="1221.5" cy="15.2" r="7" fill="none" stroke="#333" stroke-width="1.1"/>
 <path d="M1217.5 15.2H1225.5" stroke="#333" stroke-width="1.3"/>
 <path d="M1236 15.2H1327" stroke="#333" stroke-width="1"/>
 <rect x="1263.5" y="11.5" width="4" height="7.5" fill="#222"/>
 <path d="M1281 12.5V18" stroke="#333" stroke-width="1"/>
 <circle cx="1339" cy="15.2" r="7" fill="none" stroke="#333" stroke-width="1.1"/>
 <path d="M1335 15.2H1343M1339 11.2V19.2" stroke="#333" stroke-width="1.3"/>
</svg>

<div class="a" style="left:0;top:728px;width:1366px;height:40px;background:linear-gradient(90deg,#38a9c2 0%,#36a5bd 20%,#3198b2 40%,#2d8aab 62%,#2b7fa5 80%,#2c7aa2 100%)"></div>
<div class="a" style="left:0;top:728px;width:1366px;height:1px;background:#2a7f95"></div>
<svg style="left:0;top:728px" width="1366" height="40">
 <path d="M11 10.9L24 9.1V21.1H11Z M25.3 9L41 7.3V21.1H25.3Z M11 22.9H24V34.6L11 32.8Z M25.3 22.9H41V36.7L25.3 34.8Z" fill="#fff"/>
</svg>
<div class="a" style="left:60px;top:729px;width:131px;height:38px;background:#58b3c6;border:1px solid #8fd0dc"></div>
<div class="a" style="left:192px;top:729px;width:133px;height:38px;background:#58b3c6;border:1px solid #8fd0dc"></div>
<div class="a" style="left:327px;top:729px;width:131px;height:38px;background:#58b3c6;border:1px solid #8fd0dc"></div>
<div class="a" style="left:461px;top:729px;width:133px;height:38px;background:#58b3c6;border:1px solid #8fd0dc"></div>
<div class="a" style="left:597px;top:729px;width:132px;height:38px;background:#58b3c6;border:1px solid #8fd0dc"></div>
<div class="a" style="left:731px;top:729px;width:131px;height:38px;background:#58b3c6;border:1px solid #8fd0dc"></div>
<div class="a" style="left:866px;top:729px;width:131px;height:38px;background:linear-gradient(160deg,#6cb4c8,#86c1d3 60%,#9ccdd9);border:1px solid #e6f4f7"></div>
<svg style="left:0;top:0" width="1366" height="768"><g transform="translate(68 732.5)">
 <path d="M0.6 5.5Q0.6 0.6 5.5 0.6H28.6V27.8H0.6Z" fill="#fff" stroke="#1e4b9a" stroke-width="1.3"/>
 <path d="M2 22Q3 6 9 2H27.5V14Q14 10 2 22Z" fill="#b9cdef" opacity="0.9"/>
 <path d="M4.3 4.3H9.8L12.3 14.8L14.8 5.8H18.3L20.8 14.8L23.3 4.3H28.8L22.8 20.3H18.8L16.6 11.3L14.3 20.3H10.3Z" fill="#1a58c0"/>
 <path d="M4.3 4.3H9.8L11 9.5L6 10Z" fill="#2a8ae6" opacity="0.7"/>
 <path d="M17.5 16.5L30.5 20L27.5 27.5H16Z" fill="#fff"/>
 <path d="M6 24H14M18 22.5L26 24" stroke="#c9d6ea" stroke-width="0.8"/>
</g><g transform="translate(201 732.5)">
 <path d="M0.6 5.5Q0.6 0.6 5.5 0.6H28.6V27.8H0.6Z" fill="#fff" stroke="#1e4b9a" stroke-width="1.3"/>
 <path d="M2 22Q3 6 9 2H27.5V14Q14 10 2 22Z" fill="#b9cdef" opacity="0.9"/>
 <path d="M4.3 4.3H9.8L12.3 14.8L14.8 5.8H18.3L20.8 14.8L23.3 4.3H28.8L22.8 20.3H18.8L16.6 11.3L14.3 20.3H10.3Z" fill="#1a58c0"/>
 <path d="M4.3 4.3H9.8L11 9.5L6 10Z" fill="#2a8ae6" opacity="0.7"/>
 <path d="M17.5 16.5L30.5 20L27.5 27.5H16Z" fill="#fff"/>
 <path d="M6 24H14M18 22.5L26 24" stroke="#c9d6ea" stroke-width="0.8"/>
</g><g transform="translate(335.5 732.5)">
 <path d="M0.6 5.5Q0.6 0.6 5.5 0.6H28.6V27.8H0.6Z" fill="#fff" stroke="#1e4b9a" stroke-width="1.3"/>
 <path d="M2 22Q3 6 9 2H27.5V14Q14 10 2 22Z" fill="#b9cdef" opacity="0.9"/>
 <path d="M4.3 4.3H9.8L12.3 14.8L14.8 5.8H18.3L20.8 14.8L23.3 4.3H28.8L22.8 20.3H18.8L16.6 11.3L14.3 20.3H10.3Z" fill="#1a58c0"/>
 <path d="M4.3 4.3H9.8L11 9.5L6 10Z" fill="#2a8ae6" opacity="0.7"/>
 <path d="M17.5 16.5L30.5 20L27.5 27.5H16Z" fill="#fff"/>
 <path d="M6 24H14M18 22.5L26 24" stroke="#c9d6ea" stroke-width="0.8"/>
</g><g transform="translate(607 732.5)">
 <path d="M3 0.5L21.5 3.5V27.5L7 29.5Z" fill="#e6ca6c"/>
 <path d="M8.5 4L20.5 5.3V26.8L8.5 28.8Z" fill="#eed98e"/>
 <path d="M1 0L8.5 4.5V30.8L1 25Z" fill="#f8eab0" stroke="#e2c66a" stroke-width="0.5"/>
 <path d="M16.5 19.5H22.5V28L16.5 29Z" fill="#e5c64c"/>
 <rect x="19.5" y="21" width="1.4" height="6" fill="#fff"/>
</g><g transform="translate(740 732.5)">
 <path d="M3 0.5L21.5 3.5V27.5L7 29.5Z" fill="#e6ca6c"/>
 <path d="M8.5 4L20.5 5.3V26.8L8.5 28.8Z" fill="#eed98e"/>
 <path d="M1 0L8.5 4.5V30.8L1 25Z" fill="#f8eab0" stroke="#e2c66a" stroke-width="0.5"/>
 <path d="M16.5 19.5H22.5V28L16.5 29Z" fill="#e5c64c"/>
 <rect x="19.5" y="21" width="1.4" height="6" fill="#fff"/>
</g>
 <g transform="translate(485.8 748)">
  <circle r="14.5" fill="#db4437"/>
  <path d="M0 0L-12.56 7.25A14.5 14.5 0 0 1 -12.56 -7.25L0 -14.5Z" fill="#0f9d58"/>
  <path d="M0 0L-12.56 7.25A14.5 14.5 0 0 0 12.56 7.25Z" fill="#0f9d58"/>
  <path d="M0 0L12.56 -7.25A14.5 14.5 0 0 1 0 14.5L-3 8Z" fill="#ffcd40"/>
  <path d="M0 -14.5A14.5 14.5 0 0 0 -12.56 -7.25L-6.3 3.6L0 -6.5H12.56A14.5 14.5 0 0 0 0 -14.5Z" fill="#db4437"/>
  <circle r="6.8" fill="#fff"/><circle r="5.3" fill="#4285f4"/>
 </g>
 <g transform="translate(874 732)">
  <rect x="0" y="0" width="32" height="32" fill="#68217a"/>
  <path d="M4 4L28 28M28 4L4 28" stroke="#7d3a90" stroke-width="6" opacity="0.6"/>
  <rect x="25.5" y="-0.5" width="7" height="6.5" fill="#7fbdd0"/>
  <path d="M26 0V6H32Z" fill="#68217a"/>
  <path d="M20.2 9.2A7 7 0 1 0 21.2 17.3" stroke="#fff" stroke-width="3.6" fill="none"/>
  <path d="M13.3 17Q14 11.8 19.5 11.5" stroke="#fff" stroke-width="1.6" fill="none"/>
  <text x="9.6" y="29.9" style="font-family:'Liberation Sans';font-weight:bold" font-size="6.6" fill="#fff" textLength="13.5" lengthAdjust="spacingAndGlyphs">PDF</text>
 </g>
 <!-- tray -->
 <g transform="translate(1015.3 749.2)"><circle r="7.8" fill="#e0262a"/><path d="M-5 -2L3 -4M-4 3L5 -1" stroke="#2a7ea4" stroke-width="1.6"/><ellipse cx="-2" cy="-4" rx="4" ry="2" fill="#ff7a7a" opacity="0.6"/></g>
 <g transform="translate(1031 742)"><path d="M1 5H4L9 1V14L4 10H1Z" fill="#fff" stroke="#222" stroke-width="0.8"/><path d="M11 4.5Q13 7.5 11 10.5M13 2.5Q16.5 7.5 13 12.5" fill="none" stroke="#fff" stroke-width="1.2"/></g>
 <g transform="translate(1055 742)"><path d="M8 0L16 14H0Z" fill="#d93a26"/><rect x="7" y="4" width="2" height="5" fill="#fff"/><rect x="7" y="10.3" width="2" height="2" fill="#fff"/></g>
 <g transform="translate(1087.1 749)"><circle r="8" fill="#fff"/><circle cx="0" cy="-4" r="2.5" fill="#f5b800"/><circle cx="-3.8" cy="1.5" r="2.5" fill="#f5b800"/><circle cx="3.8" cy="1.5" r="2.5" fill="#f5b800"/><circle cx="-4.5" cy="-2.5" r="1.8" fill="#e8201a"/><circle cx="4.5" cy="-2.5" r="1.8" fill="#e8201a"/><circle cx="0" cy="5" r="1.8" fill="#e8201a"/><circle r="1.6" fill="#fff"/></g>
 <g transform="translate(1110.6 748.5) rotate(-22)"><path d="M-7.3 0A7.3 2.2 0 0 1 7.3 0" fill="none" stroke="#d8d8d8" stroke-width="1.2"/><circle r="4.6" fill="#2f6fd8"/><circle cx="-1.3" cy="-1.6" r="2" fill="#8ab8f2" opacity="0.7"/><path d="M-7.3 0A7.3 2.2 0 0 0 7.3 0" fill="none" stroke="#eeeeee" stroke-width="1.3"/></g>
 <g transform="translate(1128 741)"><circle cx="9" cy="6.5" r="6" fill="#3a6ee0" stroke="#0a2a6a" stroke-width="0.8"/><rect x="8.3" y="2.5" width="1.4" height="4.5" fill="#fff"/><rect x="8.3" y="8" width="1.4" height="1.4" fill="#fff"/><rect x="1" y="11" width="6" height="3.5" fill="#6a8ad8"/><rect x="0" y="14.5" width="8" height="2" fill="#ddd"/></g>
 <g transform="translate(1151 741)"><path d="M0 6H3.5L10 1V15L3.5 10H0Z" fill="#e86a36" stroke="#4a1a0a" stroke-width="0.8"/><path d="M11.5 5Q13 8 11.5 11M14 3Q16 8 14 13" fill="none" stroke="#4a1a0a" stroke-width="0.9"/></g>
 <g transform="translate(1183 749)"><circle r="7.8" fill="#f5a623"/><path d="M-7 -2A7.8 7.8 0 0 1 2 -7.6L-2 -1Z" fill="#3a7ad0"/><path d="M2 -7.6A7.8 7.8 0 0 1 7.5 -2L1 0Z" fill="#d83a3a"/><path d="M7.5 -2A7.8 7.8 0 0 1 5 6L2 1Z" fill="#5ab63a"/></g>
 <g transform="translate(1199.5 741.5)" fill="#fff" stroke="#0a2030" stroke-width="0.7"><rect x="1.5" y="0" width="1.5" height="4"/><rect x="4.5" y="0" width="1.5" height="4"/><rect x="0.5" y="4" width="6.5" height="3"/><rect x="2.8" y="7" width="2" height="8"/><rect x="8.5" y="1.8" width="6.5" height="13" fill="none" stroke="#fff" stroke-width="1.5"/><rect x="10.3" y="3.5" width="3" height="9.5" fill="#fff" stroke="none"/></g>
 <g fill="#fff" stroke="#0a2030" stroke-width="0.6"><rect x="1223.3" y="751.5" width="2.4" height="3.3"/><rect x="1227.1" y="749.5" width="2.4" height="5.3"/><rect x="1230.9" y="747.5" width="2.4" height="7.3"/><rect x="1234.7" y="745.5" width="2.4" height="9.3"/><rect x="1237.5" y="743.5" width="1.5" height="11.3" opacity="0"/></g>
</svg>

<div class="t" style="left:546.46px;top:6.70px;font-size:13px;color:#444;transform:scaleX(0.9390);">Математика 1-бөлім 1-сынып оқулық.pdf - Foxit PhantomPDF</div>
<div class="t" style="left:19.20px;top:34.30px;font-size:13px;color:#fff;transform:scaleX(0.9005);">FILE</div>
<div class="t" style="left:75.74px;top:34.30px;font-size:13px;color:#111;transform:scaleX(0.9573);">HOME</div>
<div class="t" style="left:139.15px;top:34.30px;font-size:13px;color:#444;transform:scaleX(0.8721);">CONVERT</div>
<div class="t" style="left:222.49px;top:34.30px;font-size:13px;color:#444;transform:scaleX(0.9133);">EDIT</div>
<div class="t" style="left:276.85px;top:34.30px;font-size:13px;color:#444;transform:scaleX(0.8875);">COMMENT</div>
<div class="t" style="left:365.08px;top:34.30px;font-size:13px;color:#444;transform:scaleX(0.9242);">VIEW</div>
<div class="t" style="left:421.17px;top:34.30px;font-size:13px;color:#444;transform:scaleX(0.9324);">FORM</div>
<div class="t" style="left:482.10px;top:34.30px;font-size:13px;color:#444;transform:scaleX(0.8955);">PROTECT</div>
<div class="t" style="left:564.44px;top:34.30px;font-size:13px;color:#444;transform:scaleX(0.8986);">SHARE</div>
<div class="t" style="left:630.23px;top:34.30px;font-size:13px;color:#444;transform:scaleX(0.8713);">HELP</div>
<div class="t" style="left:10.17px;top:93.70px;font-size:13px;color:#262626;transform:scaleX(0.9333);">Hand</div>
<div class="t" style="left:50.91px;top:93.70px;font-size:13px;color:#262626;transform:scaleX(0.9442);">Select</div>
<div class="t" style="left:55.94px;top:110.10px;font-size:13px;color:#262626;transform:scaleX(1.0468);">Text</div>
<div class="t" style="left:107.71px;top:93.70px;font-size:13px;color:#262626;transform:scaleX(0.9498);">Select</div>
<div class="t" style="left:94.60px;top:110.10px;font-size:13px;color:#262626;transform:scaleX(0.9743);">Annotation</div>
<div class="t" style="left:184.02px;top:60.30px;font-size:13px;color:#262626;transform:scaleX(0.9295);">SnapShot</div>
<div class="t" style="left:184.05px;top:82.30px;font-size:13px;color:#262626;transform:scaleX(0.8758);">Clipboard</div>
<div class="t" style="left:183.69px;top:104.30px;font-size:13px;color:#262626;transform:scaleX(0.9113);">Bookmark</div>
<div class="t" style="left:111.06px;top:128.50px;font-size:11.5px;color:#6b6b6b;transform:scaleX(0.9646);">Tools</div>
<div class="t" style="left:261.60px;top:94.40px;font-size:13px;color:#262626;transform:scaleX(0.9532);">Actual</div>
<div class="t" style="left:266.99px;top:110.90px;font-size:13px;color:#262626;transform:scaleX(0.8207);">Size</div>
<div class="t" style="left:323.39px;top:60.50px;font-size:13px;color:#262626;transform:scaleX(0.9131);">Fit Page</div>
<div class="t" style="left:323.32px;top:82.00px;font-size:13px;color:#262626;transform:scaleX(0.9838);">Fit Width</div>
<div class="t" style="left:323.41px;top:104.10px;font-size:13px;color:#262626;transform:scaleX(0.8936);">Fit Visible</div>
<div class="t" style="left:410.77px;top:60.10px;font-size:13px;color:#111;transform:scaleX(1.0070);">69.64%</div>
<div class="t" style="left:402.40px;top:82.30px;font-size:13px;color:#262626;">Rotate Left</div>
<div class="t" style="left:402.44px;top:104.60px;font-size:13px;color:#262626;transform:scaleX(0.9603);">Rotate Right</div>
<div class="t" style="left:370.39px;top:128.60px;font-size:11.5px;color:#6b6b6b;transform:scaleX(0.8731);">View</div>
<div class="t" style="left:524.95px;top:94.30px;font-size:13px;color:#262626;transform:scaleX(0.9849);">Typewriter</div>
<div class="t" style="left:595.28px;top:94.30px;font-size:13px;color:#262626;transform:scaleX(1.0164);">Note</div>
<div class="t" style="left:654.36px;top:60.30px;font-size:13px;color:#262626;transform:scaleX(0.9434);">Highlight</div>
<div class="t" style="left:654.69px;top:82.10px;font-size:13px;color:#262626;transform:scaleX(0.9817);">Strikeout</div>
<div class="t" style="left:654.38px;top:104.10px;font-size:13px;color:#262626;transform:scaleX(0.9238);">Underline</div>
<div class="t" style="left:591.33px;top:128.60px;font-size:11.5px;color:#6b6b6b;transform:scaleX(0.9079);">Comment</div>
<div class="t" style="left:729.14px;top:94.30px;font-size:13px;color:#262626;transform:scaleX(0.8571);">PDF</div>
<div class="t" style="left:725.05px;top:111.10px;font-size:13px;color:#262626;transform:scaleX(0.8776);">Sign</div>
<div class="t" style="left:721.62px;top:128.10px;font-size:11.5px;color:#6b6b6b;">Protect</div>
<div class="t" style="left:794.38px;top:59.90px;font-size:13px;color:#262626;transform:scaleX(0.9220);">Purchase Now</div>
<div class="t" style="left:795.30px;top:81.90px;font-size:13px;color:#262626;transform:scaleX(0.9688);">Activate</div>
<div class="t" style="left:794.31px;top:104.20px;font-size:13px;color:#262626;transform:scaleX(0.9923);">Product Info</div>
<div class="t" style="left:790.90px;top:128.60px;font-size:11.5px;color:#fff;transform:scaleX(0.9537);">Get Standard</div>
<div class="t" style="left:1141.41px;top:32.30px;font-size:13px;color:#6d6d80;transform:scaleX(0.8936);">Find</div>
<div class="t" style="left:58.47px;top:159.80px;font-size:13px;color:#262626;transform:scaleX(1.0056);">Start</div>
<div class="t" style="left:209.56px;top:160.30px;font-size:13px;color:#262626;transform:scaleX(0.9440);">Математика 1-бөлім ...</div>
<div class="t" style="left:602.79px;top:706.90px;font-size:13px;color:#222;transform:scaleX(1.0152);">57 / 140</div>
<div class="t" style="left:1142.37px;top:707.10px;font-size:13px;color:#262626;transform:scaleX(1.0093);">69.64%</div>
<div class="t" style="left:103.55px;top:741.57px;font-size:12.5px;color:#fff;transform:scaleX(0.9495);">Математика ...</div>
<div class="t" style="left:236.48px;top:741.57px;font-size:12.5px;color:#fff;transform:scaleX(1.0188);">Календарн...</div>
<div class="t" style="left:370.51px;top:741.63px;font-size:12px;color:#fff;transform:scaleX(0.9902);">Математика ...</div>
<div class="t" style="left:506.01px;top:741.63px;font-size:12px;color:#fff;transform:scaleX(0.9839);">Отправленн...</div>
<div class="t" style="left:642.02px;top:741.63px;font-size:12px;color:#fff;transform:scaleX(1.0113);">матем қосы...</div>
<div class="t" style="left:775.00px;top:741.63px;font-size:12px;color:#fff;transform:scaleX(1.0236);">1-сынып пл...</div>
<div class="t" style="left:909.71px;top:741.53px;font-size:12px;color:#fff;transform:scaleX(0.9889);">Математика ...</div>
<div class="t" style="left:1253.60px;top:742.33px;font-size:12px;color:#fff;transform:scaleX(1.0049);">ҚАЗ</div>
<div class="t" style="left:1309.64px;top:734.73px;font-size:12px;color:#fff;transform:scaleX(0.9170);">0:11</div>
<div class="t" style="left:1292.84px;top:751.63px;font-size:12px;color:#fff;transform:scaleX(0.9102);">30.08.2016</div>
</body></html>
